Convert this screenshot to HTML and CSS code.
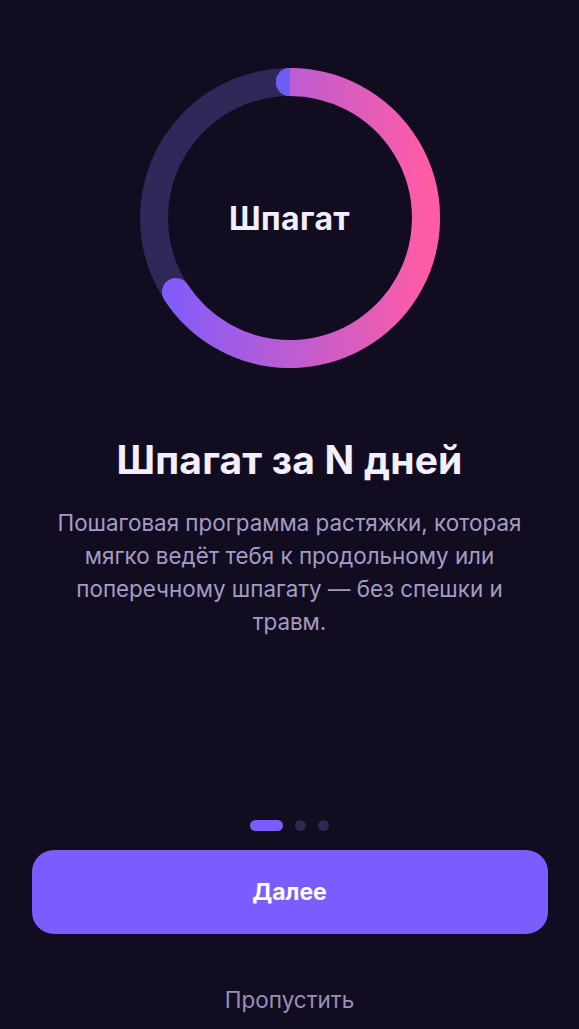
FILE: index.html
```html
<!DOCTYPE html>
<html lang="ru">
<head>
<meta charset="utf-8">
<title>Шпагат за N дней</title>
<link rel="stylesheet" href="styles.css">
</head>
<body>
<main class="screen">
  <div class="ring">
    <svg class="ring-svg" viewBox="0 0 300 300" width="300" height="300" aria-hidden="true">
      <defs>
        <linearGradient id="prog" gradientUnits="userSpaceOnUse" x1="14" y1="150" x2="286" y2="150">
          <stop offset="0" stop-color="#7a5cff"/>
          <stop offset="1" stop-color="#ff5ca6"/>
        </linearGradient>
      </defs>
      <circle cx="150" cy="150" r="136" fill="none" stroke="#2f2858" stroke-width="28"/>
      <path d="M150,14 A136,136 0 1,1 35.94,224.07" fill="none" stroke="url(#prog)" stroke-width="28" stroke-linecap="round"/>
      <path d="M150,0 A14,14 0 0,0 150,28 Z" fill="#6e5cf6"/>
    </svg>
    <div class="ring-label">Шпагат</div>
  </div>

  <h1 class="title">Шпагат за N дней</h1>
  <p class="desc">Пошаговая программа растяжки, которая<br>мягко ведёт тебя к продольному или<br>поперечному шпагату — без спешки и<br>травм.</p>

  <div class="dots">
    <span class="dot dot-active"></span>
    <span class="dot"></span>
    <span class="dot"></span>
  </div>

  <button class="btn-next" type="button">Далее</button>
  <button class="btn-skip" type="button">Пропустить</button>
</main>
</body>
</html>
```
FILE: styles.css
```css
* { box-sizing: border-box; }
html, body {
  margin: 0;
  padding: 0;
  background: #110c20;
}
body {
  font-family: Inter, "Noto Sans", "Liberation Sans", sans-serif;
  color: #f1ecfc;
}
.screen {
  width: 579px;
  height: 1029px;
  display: flex;
  flex-direction: column;
  align-items: center;
  overflow: hidden;
}
.ring {
  margin-top: 68px;
  width: 300px;
  height: 300px;
  display: grid;
  place-items: center;
}
.ring-svg, .ring-label {
  grid-area: 1 / 1;
}
.ring-svg { display: block; }
.ring-label {
  font-size: 32px;
  font-weight: 700;
  color: #f2edff;
  letter-spacing: 0.4px;
}
.title {
  margin: 72px 0 0;
  font-size: 39px;
  line-height: 40px;
  font-weight: 700;
  color: #f3effd;
  letter-spacing: 0.2px;
}
.desc {
  margin: 26px 0 0;
  width: 540px;
  text-align: center;
  font-size: 22.4px;
  line-height: 33px;
  color: #a69bc3;
}
.dots {
  margin-top: auto;
  display: flex;
  gap: 12px;
  align-items: center;
}
.dot {
  width: 11px;
  height: 11px;
  border-radius: 6px;
  background: #2e2852;
}
.dot-active {
  width: 33px;
  background: #7b5cfe;
}
.btn-next {
  margin-top: 19px;
  width: 516px;
  height: 84px;
  border: none;
  border-radius: 22px;
  background: #7b5cfe;
  color: #ffffff;
  font-family: inherit;
  font-size: 23px;
  font-weight: 700;
}
.btn-skip {
  margin: 52px 0 15px;
  height: 28px;
  border: none;
  background: none;
  padding: 0;
  font-family: inherit;
  font-size: 22.5px;
  line-height: 28px;
  color: #9a90b4;
}
```
